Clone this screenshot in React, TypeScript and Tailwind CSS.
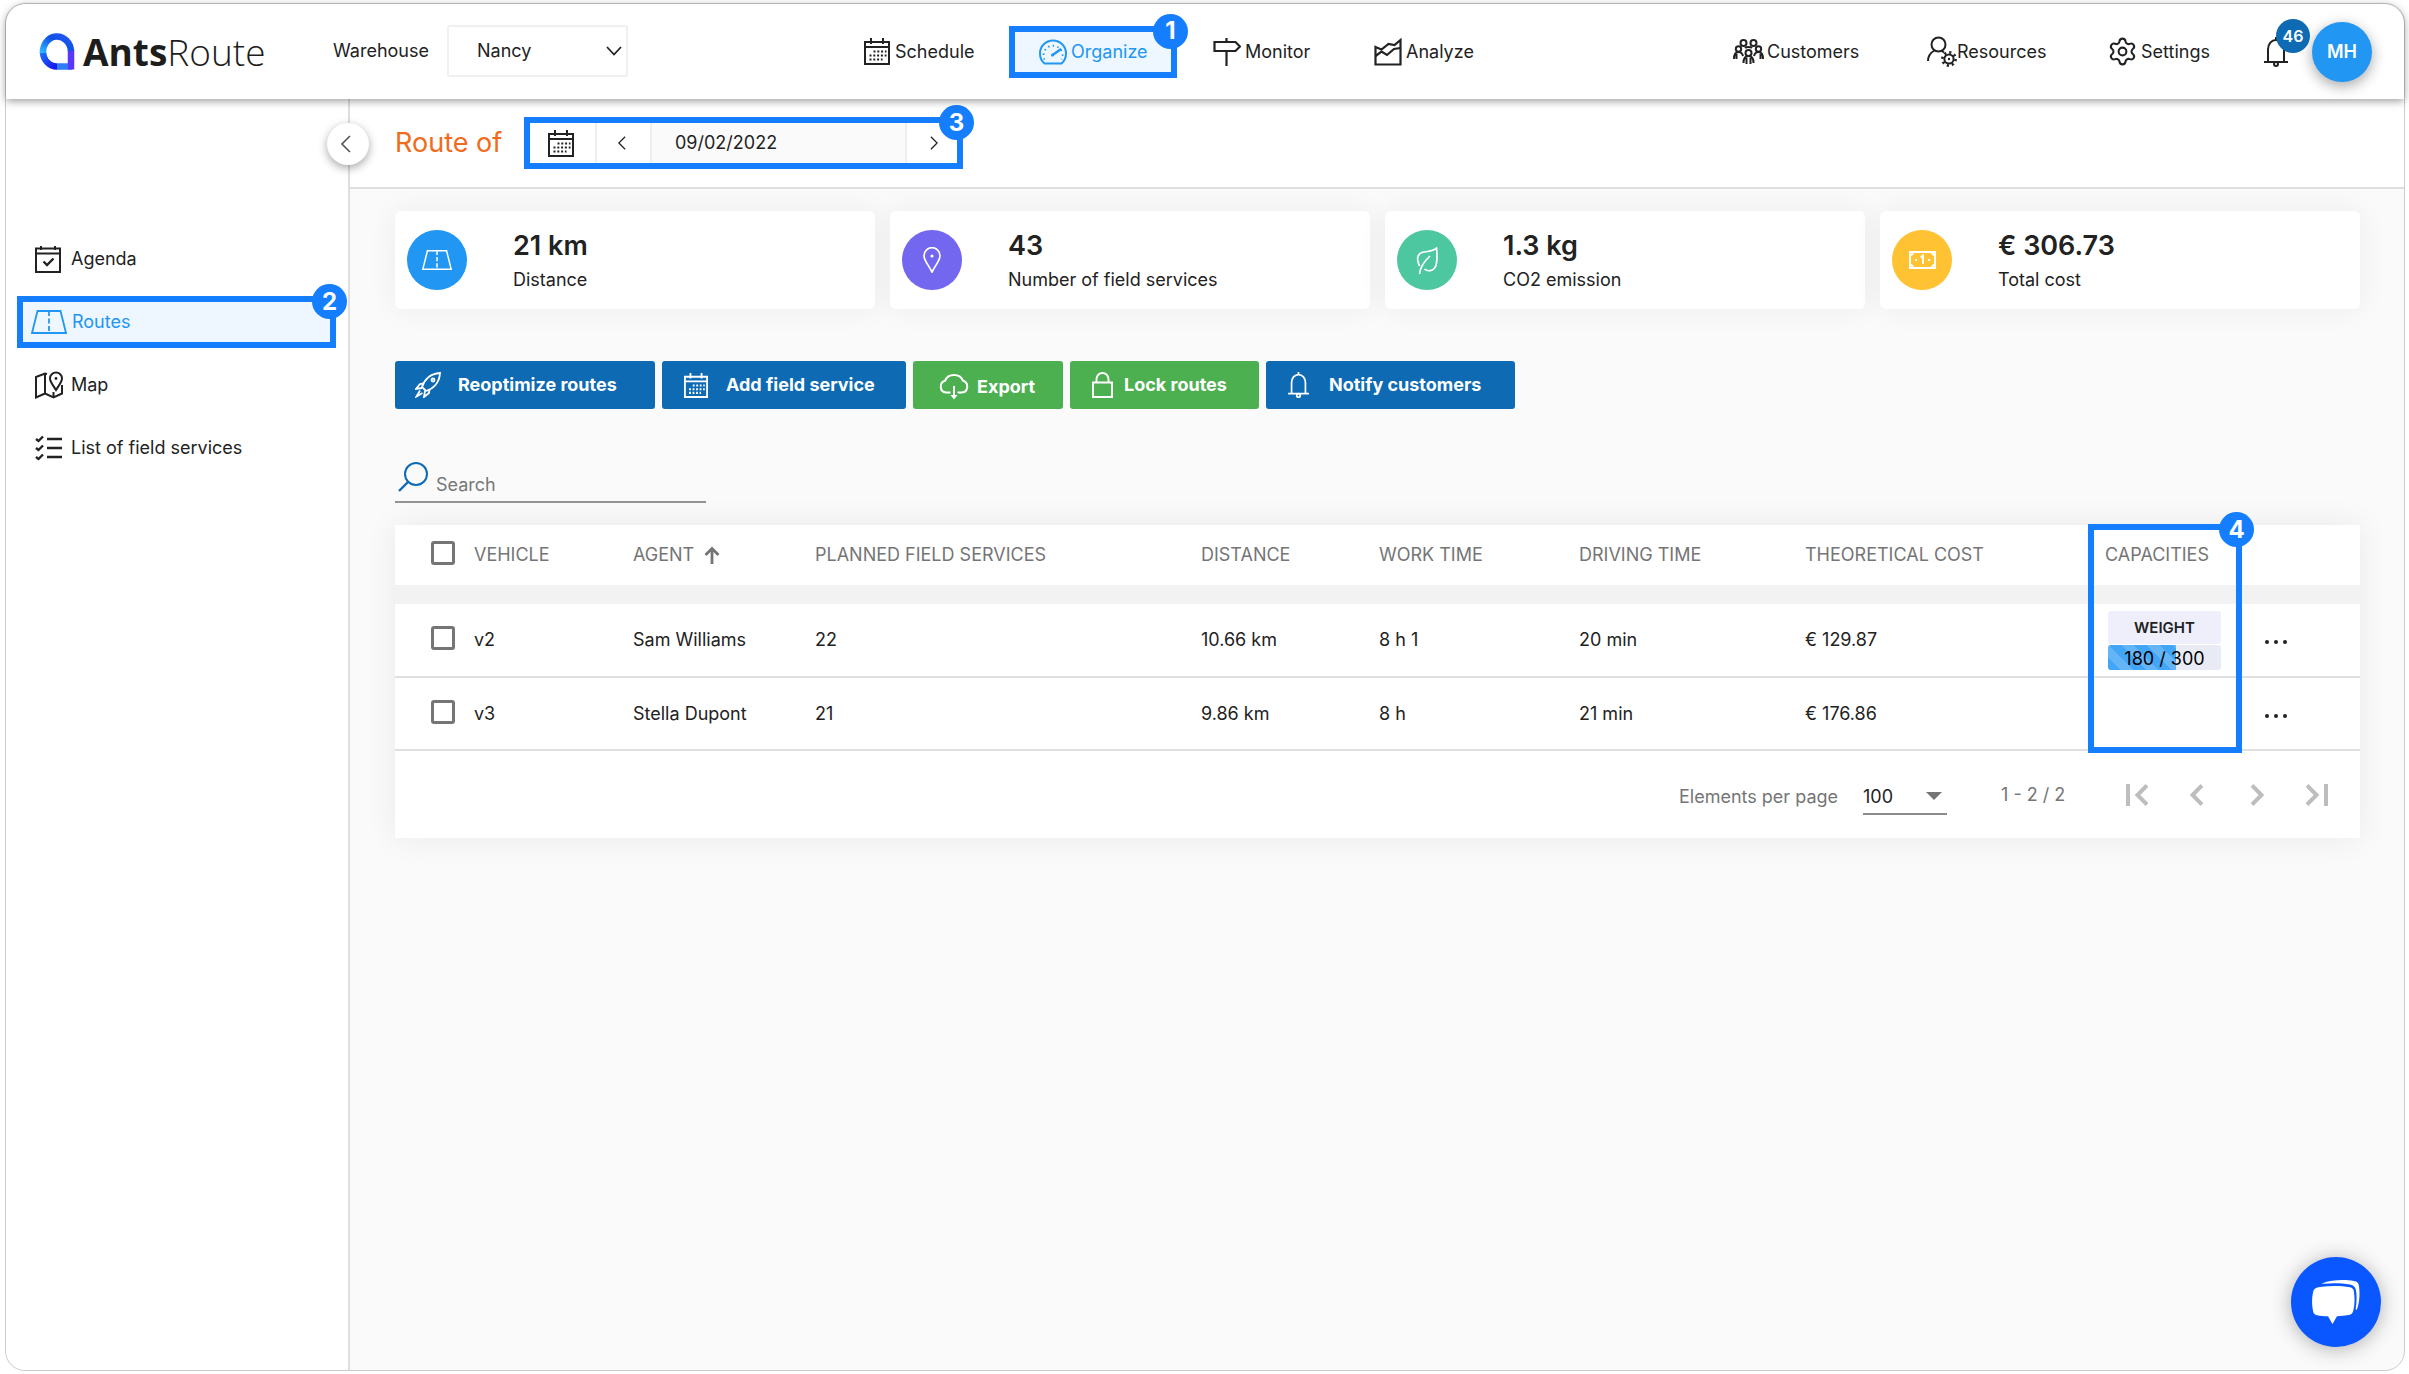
import React, { useState } from 'react';
import { Settings } from 'lucide-react';

type IconProps = { className?: string };

/* ---------- ICONS ---------- */

const CalendarIcon = ({ className }: IconProps) => (
    <svg viewBox="0 0 26 27" className={className} fill="none" stroke="currentColor" strokeWidth="2">
        <path d="M1 4h24v22H1zM1 9h24M7 0v6M19 0v6" />
        <path d="M9.500 13.500h13M5.500 17.500h17M5.500 21.500h13" strokeDasharray="2 1.800" strokeWidth="2.200" />
    </svg>
);

const GaugeIcon = ({ className }: IconProps) => (
    <svg viewBox="0 0 28 26" className={className} fill="none" stroke="currentColor" strokeWidth="2">
        <path d="M5.500 24.500C2.500 22 1 18.500 1 14.500a13 13 0 0 1 26 0c0 4-1.500 7.500-4.500 10z" />
        <path d="M5.500 20.500A9.500 9.500 0 1 1 22.500 20.500" strokeDasharray="1.500 3.200" strokeWidth="1.800" />
        <path d="M13 16.500L22 10" strokeWidth="2.400" />
        <circle cx="13.500" cy="16" r="1.500" fill="currentColor" stroke="none" />
    </svg>
);

const SignIcon = ({ className }: IconProps) => (
    <svg viewBox="0 0 28 28" className={className} fill="none" stroke="currentColor" strokeWidth="2.200">
        <path d="M1.500 4h21l4.500 4.500-4.500 4.500h-21zM13.500 0v4M13.500 13v15" />
    </svg>
);

const AnalyzeIcon = ({ className }: IconProps) => (
    <svg viewBox="0 0 28 28" className={className} fill="none" stroke="currentColor" strokeWidth="2.200">
        <path d="M1.500 9l6 2.500 7-5.500 6 1L26.500 2v24.500h-25z" />
        <path d="M1.500 18l6-4.500 5.500 3.500 7-6 6.500-1" />
    </svg>
);

const CustomersIcon = ({ className }: IconProps) => (
    <svg viewBox="0 0 31 25" className={className} fill="none" stroke="currentColor" strokeWidth="2">
        <circle cx="10.500" cy="4" r="3" />
        <circle cx="20.500" cy="4" r="3" />
        <circle cx="5.500" cy="10" r="2.700" />
        <circle cx="25.500" cy="10" r="2.700" />
        <circle cx="15.500" cy="14" r="3" />
        <path d="M1 20c0-4 1.500-7 4.500-7s4 2 4.500 4M30 20c0-4-1.500-7-4.500-7s-4 2-4.500 4M3.500 15v5M27.500 15v5M10.500 24c0-4 1.500-7 5-7s5 3 5 7M13.500 19v6M17.500 19v6M12 9c1.500-1.500 5.500-1.500 7 0" />
    </svg>
);

const ResourcesIcon = ({ className }: IconProps) => (
    <svg viewBox="0 0 30 31" className={className} fill="none" stroke="currentColor" strokeWidth="2">
        <circle cx="11.500" cy="8.500" r="7" />
        <path d="M1 25c0-5 2-8 6.500-10.500M15 15l2 1.500" />
        <circle cx="22" cy="23" r="4.600" />
        <circle cx="22" cy="23" r="6.600" strokeDasharray="2.200 2.980" strokeWidth="2.600" />
        <circle cx="22" cy="23" r="1.200" fill="currentColor" stroke="none" />
    </svg>
);

const BellIcon = ({ className }: IconProps) => (
    <svg viewBox="0 0 24 30" className={className} fill="none" stroke="currentColor" strokeWidth="2">
        <path d="M4 25V12.500C4 7 7.500 3 12 3s8 4 8 9.500V25M0 25h24M12 0v3" />
        <circle cx="12" cy="27" r="2" />
    </svg>
);

const AgendaIcon = ({ className }: IconProps) => (
    <svg viewBox="0 0 26 27" className={className} fill="none" stroke="currentColor" strokeWidth="2">
        <path d="M1 2.500h24V26H1zM1 7.500h24M6 0v4M20 0v4" />
        <path d="M8.500 15.500l3.500 3.500 6.500-6.500" strokeWidth="2.400" />
    </svg>
);

const RoadIcon = ({ className }: IconProps) => (
    <svg viewBox="0 0 36 24" className={className} fill="none" stroke="currentColor" strokeWidth="1.800">
        <path d="M6.500 1h23l5.500 22H1z" />
        <path d="M18 1v22" strokeDasharray="5 2.500" />
    </svg>
);

const MapIcon = ({ className }: IconProps) => (
    <svg viewBox="0 0 28 28" className={className} fill="none" stroke="currentColor" strokeWidth="2">
        <path d="M12 3L10 2.500 1 6v20.500l9-4V2.500M10 22.500l8.500 4 8.500-4V14M18.500 21v5.500" />
        <path d="M21 19c-3-5-6-8-6-11.500a6 6 0 0 1 12 0c0 3.500-3 6.500-6 11.500z" />
        <circle cx="21" cy="7.500" r="1.400" fill="currentColor" stroke="none" />
    </svg>
);

const ListIcon = ({ className }: IconProps) => (
    <svg viewBox="0 0 28 26" className={className} fill="none" stroke="currentColor" strokeWidth="2.400">
        <path d="M12 4h15M12 13h15M12 22h15M1 4l2.500 2L8 1.500M1 13l2.500 2L8 10.500M1 22l2.500 2L8 19.500" />
    </svg>
);

const PinIcon = ({ className }: IconProps) => (
    <svg viewBox="0 0 18 26" className={className} fill="none" stroke="currentColor" strokeWidth="1.700">
        <path d="M9 25C5.500 18 1 13.500 1 8.700a8 8 0 0 1 16 0C17 13.500 12.500 18 9 25z" />
        <circle cx="9" cy="9" r="1.600" fill="currentColor" stroke="none" />
    </svg>
);

const LeafIcon = ({ className }: IconProps) => (
    <svg viewBox="0 0 22 27" className={className} fill="none" stroke="currentColor" strokeWidth="1.700">
        <path d="M3.500 19C.5 13 .5 6 8 5c5-.7 10-1 12.500-4 .8 8 1 14-1 18.500-2 4.500-8 5.500-11 2.500" />
        <path d="M3.500 27c.5-6 4-12 10.500-18" />
    </svg>
);

const MoneyIcon = ({ className }: IconProps) => (
    <svg viewBox="0 0 27 18" className={className} fill="none" stroke="currentColor" strokeWidth="1.900">
        <path d="M1 1h25v16H1z" />
        <path d="M1 4A3 3 0 0 0 4 1M23 1A3 3 0 0 0 26 4M26 14a3 3 0 0 0-3 3M4 17A3 3 0 0 0 1 14M11.500 6.500l2.500-2V13" />
        <path d="M6 9h2M19 9h2" strokeWidth="2.200" />
    </svg>
);

const RocketIcon = ({ className }: IconProps) => (
    <svg viewBox="0 0 26 26" className={className} fill="none" stroke="currentColor" strokeWidth="1.800">
        <path d="M7 15C9 8 15 1.500 25 1c-.5 10-7 16-14 18z" />
        <path d="M8.500 11.500L5 12l-4 5 6-1M14.500 17.500L14 21l-5 4 1-6M5 18.500L1.500 24.500 7.500 21" />
        <circle cx="18" cy="8" r="1.500" />
    </svg>
);

const CloudIcon = ({ className }: IconProps) => (
    <svg viewBox="0 0 30 26" className={className} fill="none" stroke="currentColor" strokeWidth="2">
        <path d="M11.500 18.500H7A6 6 0 0 1 6 6.800C7.500 3 11 1 15 1s7.500 2 9 5.800a6 6 0 0 1-1 11.700h-4.500" />
        <path d="M15 12v11" />
        <path d="M11.500 21l3.500 4.500 3.500-4.500z" fill="currentColor" stroke="none" />
    </svg>
);

const LockIcon = ({ className }: IconProps) => (
    <svg viewBox="0 0 21 26" className={className} fill="none" stroke="currentColor" strokeWidth="1.900">
        <path d="M1 10.500h19V25H1zM4.500 10.500V7a6 6 0 0 1 12 0v3.500" />
    </svg>
);

const SearchIcon = ({ className }: IconProps) => (
    <svg viewBox="0 0 30 30" className={className} fill="none" stroke="currentColor" strokeWidth="2">
        <circle cx="18" cy="12" r="11" />
        <path d="M10.500 19.500L1 29" strokeWidth="2.400" />
    </svg>
);

const Chevron = ({ className, flip }: IconProps & { flip?: boolean }) => (
    <svg viewBox="0 0 10 18" className={className} fill="none" stroke="currentColor" strokeWidth="1.600">
        <path d={flip ? 'M1 1l8 8-8 8' : 'M9 1L1 9l8 8'} />
    </svg>
);

const ChatIcon = ({ className }: IconProps) => (
    <svg viewBox="0 0 48 45" className={className} fill="white">
        <path d="M8 7c10-1.500 21-1.500 30 .3 2.500.5 4 2.200 4 5 .8 6 .8 12-.6 18-.4 2.600-2 4.300-4.400 4.700-4 .7-8 1-12 1.200L20.500 44 16 36.200c-4-.1-7-.4-11-1-2.500-.4-3.600-2-4-4.500-1.300-6-1.300-12 0-18.500C1.500 9 4 7.300 8 7z" />
        <path d="M10 3.500C20-.5 33-.5 42 1c3 .5 4.700 2 5 5 1 8 .6 16-2 23.500-1 .5-1.500 0-1.300-1 1-6 1.300-12 .3-18-.5-3.500-2.500-5.500-6-6-8-1.500-18-1.600-27-.8-1.200 0-1.800.2-1-.2z" />
    </svg>
);

const Logo = () => (
    <svg viewBox="0 0 36 37" className="h-[37px] w-9" fill="none" strokeWidth="6.500">
        <defs>
            <linearGradient id="lgTop" x1="0" y1="1" x2="1" y2="0">
                <stop offset="0" stopColor="#2bb8ff" />
                <stop offset="0.600" stopColor="#1150e8" />
                <stop offset="1" stopColor="#2458f5" />
            </linearGradient>
            <linearGradient id="lgLeft" x1="0" y1="0" x2="1" y2="1">
                <stop offset="0" stopColor="#1d6dfa" />
                <stop offset="1" stopColor="#1a14ee" />
            </linearGradient>
        </defs>
        <path d="M18 33.500h15" stroke="#2c7dfb" />
        <path d="M32 17v19.500" stroke="#5a35fb" />
        <path d="M4 19A14 15 0 0 0 18 33.500" stroke="url(#lgLeft)" />
        <path d="M4 20A14 15.500 0 0 1 32 18" stroke="url(#lgTop)" />
    </svg>
);

/* ---------- SMALL PIECES ---------- */

const StepBadge = ({ n, className }: { n: number; className: string }) => (
    <span className={`absolute flex size-[35px] items-center justify-center rounded-full bg-[#147eff] text-2xl font-bold text-white ${className}`}>
        {n}
    </span>
);

const Checkbox = ({ label }: { label: string }) => (
    <input
        type="checkbox"
        aria-label={label}
        className="mb-1 block size-6 appearance-none rounded-[3px] border-[3px] border-[#757575] bg-white checked:bg-[#147eff]"
    />
);

/* ---------- DATA ---------- */

const stats = [
    { value: '21 km', label: 'Distance', color: 'bg-[#2196f3]', icon: <RoadIcon className="h-5 w-[30px]" /> },
    { value: '43', label: 'Number of field services', color: 'bg-[#7367f0]', icon: <PinIcon className="h-[26px] w-[18px]" /> },
    { value: '1.3 kg', label: 'CO2 emission', color: 'bg-[#4dc7a0]', icon: <LeafIcon className="h-[27px] w-[22px]" /> },
    { value: '€ 306.73', label: 'Total cost', color: 'bg-[#ffc233]', icon: <MoneyIcon className="h-[18px] w-[27px]" /> },
];

const rows = [
    { vehicle: 'v2', agent: 'Sam Williams', services: 22, distance: '10.66 km', work: '8 h 1', driving: '20 min', cost: '€ 129.87', load: 180, max: 300 },
    { vehicle: 'v3', agent: 'Stella Dupont', services: 21, distance: '9.86 km', work: '8 h', driving: '21 min', cost: '€ 176.86', load: 0, max: 0 },
];

/* ---------- PAGE PARTS ---------- */

function Header() {
    return (
        <header className="relative z-10 flex h-[95px] shrink-0 items-center justify-between rounded-t-[20px] bg-white pr-8 pl-[33px] shadow-[0_2px_8px_rgba(0,0,0,0.4)]">
            <div className="flex items-center">
                <a href="#" className="flex w-[294px] items-center gap-2 font-['Open_Sans',sans-serif] text-[37px] text-[#1d1d1b]">
                    <Logo />
                    <span><b>Ants</b><span className="font-light">Route</span></span>
                </a>
                <label htmlFor="warehouse" className="w-[114px]">Warehouse</label>
                <div className="relative">
                    <select id="warehouse" className="h-[52px] w-[181px] appearance-none rounded-[3px] border-2 border-[#f0f0f0] bg-white pl-7">
                        <option>Nancy</option>
                    </select>
                    <svg viewBox="0 0 16 10" className="pointer-events-none absolute top-[21px] right-[6px] h-2.5 w-4" fill="none" stroke="currentColor" strokeWidth="1.800">
                        <path d="M1 1l7 7.500L15 1" />
                    </svg>
                </div>
            </div>

            <nav className="flex items-center">
                <a href="#" className="flex w-[145px] items-center gap-[5px]"><CalendarIcon className="h-[27px] w-[26px]" />Schedule</a>
                <a href="#" className="relative mr-9 flex h-[52px] w-[168px] items-center gap-1 border-[6px] border-[#147eff] bg-[#eef7ff] pl-6 text-[#2196f3]">
                    <GaugeIcon className="h-[26px] w-7" />Organize
                    <StepBadge n={1} className="-top-[18px] -right-[17px]" />
                </a>
                <a href="#" className="flex w-[161px] items-center gap-1"><SignIcon className="size-7" />Monitor</a>
                <a href="#" className="flex w-[123px] items-center gap-1"><AnalyzeIcon className="size-7" />Analyze</a>
            </nav>

            <div className="flex items-center">
                <a href="#" className="flex w-[194px] items-center gap-[3px]"><CustomersIcon className="h-[25px] w-[31px]" />Customers</a>
                <a href="#" className="flex w-[180px] items-center"><ResourcesIcon className="h-[31px] w-[30px]" />Resources</a>
                <a href="#" className="flex w-[157px] items-center gap-[3px]"><Settings className="size-[31px]" strokeWidth={1.6} />Settings</a>
                <button type="button" aria-label="Notifications" className="relative mr-6">
                    <BellIcon className="h-[30px] w-6" />
                    <span className="absolute -top-[18px] left-3 flex size-[34px] items-center justify-center rounded-full bg-[#0d6ab3] text-base font-semibold text-white">46</span>
                </button>
                <button type="button" className="flex size-[60px] items-center justify-center rounded-full bg-[#2196f3] font-semibold text-white shadow-[0_4px_14px_rgba(0,0,0,0.35)]">MH</button>
            </div>
        </header>
    );
}

function Sidebar() {
    return (
        <aside className="relative w-[344px] shrink-0 rounded-bl-[20px] border-r-2 border-[#dedede] bg-white pt-[134px]">
            <button type="button" aria-label="Collapse menu" className="absolute top-6 -right-[21px] flex size-[42px] items-center justify-center rounded-full bg-white pr-1 text-[#555] shadow-[0_3px_10px_rgba(0,0,0,0.35)]">
                <Chevron className="h-[18px] w-2.5" />
            </button>
            <nav className="flex flex-col gap-[11px] pr-3 pl-[11px]">
                <a href="#" className="flex h-[52px] items-center pl-[18px]">
                    <AgendaIcon className="mr-2.5 h-[27px] w-[26px]" />Agenda
                </a>
                <a href="#" className="relative flex h-[52px] items-center gap-[5px] border-[6px] border-[#147eff] bg-[#eef7ff] pl-2 text-[#2196f3]">
                    <RoadIcon className="h-6 w-9" />Routes
                    <StepBadge n={2} className="-top-[18px] -right-[17px]" />
                </a>
                <a href="#" className="flex h-[52px] items-center pl-[18px]">
                    <MapIcon className="mr-2 size-7" />Map
                </a>
                <a href="#" className="flex h-[52px] items-center pl-[18px]">
                    <ListIcon className="mr-2 h-[26px] w-7" />List of field services
                </a>
            </nav>
        </aside>
    );
}

function TitleBar() {
    const [date, setDate] = useState('09/02/2022');

    return (
        <div className="flex h-[90px] items-center border-b-2 border-[#dedede] bg-white pl-[45px]">
            <h1 className="w-[129px] text-[27px] text-[#f26a1b]">Route of</h1>
            <div className="relative flex h-[52px] items-stretch border-[6px] border-[#147eff]">
                <button type="button" aria-label="Open calendar" className="flex w-[67px] items-center justify-center border-r-2 border-[#eee] pr-1">
                    <CalendarIcon className="h-[27px] w-[26px]" />
                </button>
                <button type="button" aria-label="Previous day" className="flex w-[55px] items-center justify-center border-r-2 border-[#eee] pr-1">
                    <Chevron className="h-3.5 w-2" />
                </button>
                <input
                    aria-label="Date"
                    value={date}
                    onChange={(e) => setDate(e.target.value)}
                    className="w-[255px] border-r-2 border-[#eee] bg-[#fafafa] pl-[23px] outline-none"
                />
                <button type="button" aria-label="Next day" className="flex w-[50px] items-center justify-center pl-1">
                    <Chevron flip className="h-3.5 w-2" />
                </button>
                <StepBadge n={3} className="-top-[18px] -right-[17px]" />
            </div>
        </div>
    );
}

function RoutesTable() {
    const [pageSize, setPageSize] = useState('100');

    return (
        <section className="relative bg-[#f2f2f3] shadow-[0_0_30px_rgba(0,0,0,0.07)]">
            <table className="w-full table-fixed text-left">
                <colgroup>
                    <col className="w-[79px]" />
                    <col className="w-[159px]" />
                    <col className="w-[182px]" />
                    <col className="w-[386px]" />
                    <col className="w-[178px]" />
                    <col className="w-[200px]" />
                    <col className="w-[226px]" />
                    <col className="w-[300px]" />
                    <col className="w-[160px]" />
                    <col className="w-[95px]" />
                </colgroup>
                <thead>
                    <tr className="h-[60px] bg-white text-[#757575] [&>th]:font-normal">
                        <th className="pl-9"><Checkbox label="Select all routes" /></th>
                        <th>VEHICLE</th>
                        <th>
                            <span className="flex items-center gap-2.5">
                                AGENT
                                <svg viewBox="0 0 16 18" className="h-[18px] w-4" fill="none" stroke="currentColor" strokeWidth="2.800">
                                    <path d="M8 18V3M1.500 9L8 2.500 14.500 9" />
                                </svg>
                            </span>
                        </th>
                        <th>PLANNED FIELD SERVICES</th>
                        <th>DISTANCE</th>
                        <th>WORK TIME</th>
                        <th>DRIVING TIME</th>
                        <th>THEORETICAL COST</th>
                        <th>CAPACITIES</th>
                        <th aria-label="Actions" />
                    </tr>
                </thead>
                <tbody>
                    <tr aria-hidden="true" className="h-[19px]"><td colSpan={10} /></tr>
                    {rows.map((row) => (
                        <tr key={row.vehicle} className="h-[73px] border-b-2 border-[#dfdfdf] bg-white">
                            <td className="pl-9"><Checkbox label={`Select ${row.vehicle}`} /></td>
                            <td>{row.vehicle}</td>
                            <td>{row.agent}</td>
                            <td>{row.services}</td>
                            <td>{row.distance}</td>
                            <td>{row.work}</td>
                            <td>{row.driving}</td>
                            <td>{row.cost}</td>
                            <td className="pl-[3px]">
                                {row.max > 0 && (
                                    <div className="w-[113px] text-center">
                                        <div className="mb-px h-[33px] rounded-[3px] bg-[#eeeffb] text-[15px] leading-[33px] font-semibold">WEIGHT</div>
                                        <div className="relative h-[25px] overflow-hidden rounded-[3px] bg-[#e9ebf4] leading-[27px] text-black">
                                            <div
                                                className="absolute inset-y-0 left-0 bg-[#42a5f5] bg-[repeating-linear-gradient(45deg,transparent_0_9px,rgba(255,255,255,0.18)_9px_18px)]"
                                                style={{ width: `${(row.load / row.max) * 100}%` }}
                                            />
                                            <span className="relative">{row.load} / {row.max}</span>
                                        </div>
                                    </div>
                                )}
                            </td>
                            <td>
                                <button type="button" aria-label={`Actions for ${row.vehicle}`} className="flex gap-[5px] pt-1">
                                    <i className="size-1 rounded-full bg-current" />
                                    <i className="size-1 rounded-full bg-current" />
                                    <i className="size-1 rounded-full bg-current" />
                                </button>
                            </td>
                        </tr>
                    ))}
                </tbody>
            </table>

            {/* FOOTER */}
            <div className="flex h-[87px] items-center justify-end bg-white pr-8 text-[#757575]">
                <label htmlFor="pageSize" className="w-[184px] pt-1">Elements per page</label>
                <div className="relative mr-[54px] pt-1">
                    <select
                        id="pageSize"
                        value={pageSize}
                        onChange={(e) => setPageSize(e.target.value)}
                        className="h-9 w-[84px] appearance-none border-b-2 border-[#8c8c8c] bg-white pt-0.5 text-[#222]"
                    >
                        <option>100</option>
                        <option>50</option>
                    </select>
                    <svg viewBox="0 0 16 8" className="pointer-events-none absolute top-[17px] right-[5px] h-2 w-4" fill="currentColor"><path d="M0 0h16L8 8z" /></svg>
                </div>
                <span className="w-[125px]">1 - 2 / 2</span>
                <div className="flex items-center justify-between text-[#bdbdbd] [&_svg]:h-[22px] [&_svg]:fill-none [&_svg]:stroke-current [&_svg]:stroke-4">
                    <button type="button" aria-label="First page" className="mr-[42px]"><svg viewBox="0 0 22 22" className="w-[22px]"><path d="M2 0v22M21 1.500L11.500 11l9.500 9.500" /></svg></button>
                    <button type="button" aria-label="Previous page" className="mr-12"><svg viewBox="0 0 13 22" className="w-[13px]"><path d="M12 1.500L2.500 11l9.500 9.500" /></svg></button>
                    <button type="button" aria-label="Next page" className="mr-[42px]"><svg viewBox="0 0 13 22" className="w-[13px]"><path d="M1 1.500L10.500 11 1 20.500" /></svg></button>
                    <button type="button" aria-label="Last page"><svg viewBox="0 0 22 22" className="w-[22px]"><path d="M20 0v22M1 1.500L10.500 11 1 20.500" /></svg></button>
                </div>
            </div>

            {/* capacities column highlight */}
            <div className="pointer-events-none absolute -top-px right-[118px] h-[229px] w-[154px] border-[6px] border-[#147eff]">
                <StepBadge n={4} className="-top-[18px] -right-[18px]" />
            </div>
        </section>
    );
}

export default function App() {
    return (
        <div className="flex min-h-screen bg-white px-[5px] py-[3px] font-[Inter,sans-serif] text-lg text-[#222]">
            <div className="flex flex-1 flex-col rounded-[20px] border border-[#ccc] bg-[#fafafa]">
                <Header />
                <div className="flex flex-1">
                    <Sidebar />
                    <main className="min-w-0 flex-1">
                        <TitleBar />
                        <div className="pt-[22px] pr-11 pl-[45px]">
                            <div className="grid grid-cols-4 gap-[15px]">
                                {stats.map((s) => (
                                    <div key={s.label} className="flex h-[98px] items-center rounded-md bg-white pl-3 shadow-[0_0_30px_rgba(0,0,0,0.06)]">
                                        <div className={`mr-[46px] flex size-[60px] items-center justify-center rounded-full text-white ${s.color}`}>{s.icon}</div>
                                        <div className="pt-1">
                                            <p className="text-[27px] leading-9 font-semibold">{s.value}</p>
                                            <p className="leading-8">{s.label}</p>
                                        </div>
                                    </div>
                                ))}
                            </div>

                            {/* ACTIONS */}
                            <div className="mt-[52px] flex gap-[7px] font-bold text-white [&>button]:flex [&>button]:h-12 [&>button]:items-center [&>button]:rounded-[3px]">
                                <button type="button" className="w-[260px] gap-[17px] bg-[#0d6ab3] pl-5"><RocketIcon className="size-[26px]" />Reoptimize routes</button>
                                <button type="button" className="w-[244px] gap-[18px] bg-[#0d6ab3] pl-[22px]"><CalendarIcon className="h-[25px] w-6" />Add field service</button>
                                <button type="button" className="w-[150px] gap-2 bg-[#4caf50] pt-1 pl-[26px]"><CloudIcon className="h-[26px] w-[30px]" />Export</button>
                                <button type="button" className="w-[189px] gap-[11px] bg-[#4caf50] pl-[22px]"><LockIcon className="h-[26px] w-[21px]" />Lock routes</button>
                                <button type="button" className="w-[249px] gap-5 bg-[#0d6ab3] pl-[22px]"><BellIcon className="h-[26px] w-[21px]" />Notify customers</button>
                            </div>

                            {/* SEARCH */}
                            <div className="mt-12 mb-[22px] flex h-[46px] w-[311px] items-center gap-2 border-b-2 border-[#949494] pl-[3px]">
                                <SearchIcon className="mb-1 h-[30px] w-[30px] shrink-0 text-[#0d6ab3]" />
                                <input type="search" aria-label="Search" placeholder="Search" className="w-full bg-transparent pt-3 outline-none placeholder:text-[#777]" />
                            </div>

                            <RoutesTable />
                        </div>
                    </main>
                </div>
            </div>

            <button type="button" aria-label="Open chat" className="fixed right-7 bottom-[27px] flex size-[90px] items-center justify-center rounded-full bg-[#0b57ff] shadow-[0_2px_20px_rgba(0,0,0,0.3)]">
                <ChatIcon className="h-[45px] w-12" />
            </button>
        </div>
    );
}
